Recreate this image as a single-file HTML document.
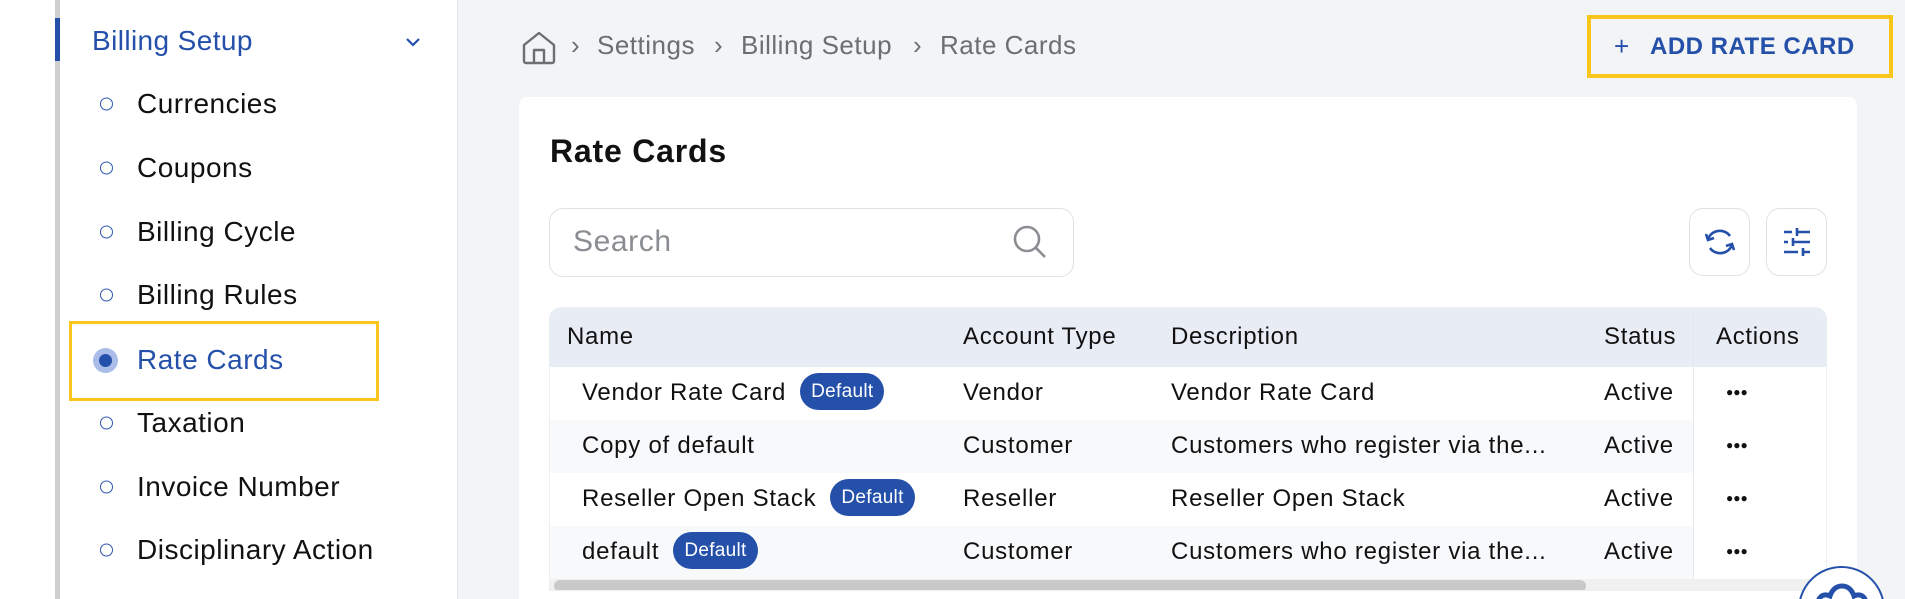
<!DOCTYPE html>
<html style="width:1905px;height:599px;overflow:hidden"><head><meta charset="utf-8"><style>
*{margin:0;padding:0;box-sizing:border-box}
body{width:1905px;height:599px;overflow:hidden;background:#f3f4f6;font-family:"Liberation Sans",sans-serif;position:relative;color:#111}
.a{position:absolute;white-space:nowrap}
#side{position:absolute;left:0;top:0;width:458px;height:599px;background:#fff;border-right:1px solid #e3e5e9}
.mi{position:absolute;left:137px;font-size:28px;letter-spacing:0.5px;color:#111;transform:translateY(-50%)}
.dot{position:absolute;left:100px;width:13px;height:13px;border:1.5px solid #2f55b0;border-radius:50%;transform:translateY(-50%)}
.th{position:absolute;top:307px;height:59px;line-height:59px;font-size:24px;letter-spacing:0.7px;color:#111}
.td{position:absolute;font-size:24px;letter-spacing:0.75px;color:#111;line-height:53px}
.badge{display:inline-block;background:#2450aa;color:#fff;font-size:19px;letter-spacing:0.3px;line-height:37px;height:37px;padding:0 11px;border-radius:19px;vertical-align:middle;margin-left:14px;position:relative;top:-2px}
.dots{position:absolute;left:1726px;font-size:12px}
.bc{position:absolute;top:30px;font-size:26px;letter-spacing:0.5px;color:#6b6e73}
</style></head><body>
<div id="side">
 <div class="a" style="left:55px;top:0;width:5px;height:599px;background:#cfcfcf"></div>
 <div class="a" style="left:55px;top:18px;width:5px;height:43px;background:#2450aa"></div>
 <div class="a" style="left:92px;top:25px;font-size:28px;letter-spacing:0.4px;color:#2450aa">Billing Setup</div>
 <svg class="a" style="left:403px;top:35px" width="20" height="14" viewBox="0 0 20 14"><path d="M4 4l6 6 6-6" stroke="#2450aa" stroke-width="2.2" fill="none"/></svg>
 <div class="dot" style="top:104px"></div><div class="mi" style="top:104px">Currencies</div>
 <div class="dot" style="top:168px"></div><div class="mi" style="top:168px">Coupons</div>
 <div class="dot" style="top:232px"></div><div class="mi" style="top:232px">Billing Cycle</div>
 <div class="dot" style="top:295px"></div><div class="mi" style="top:295px">Billing Rules</div>
 <div class="a" style="left:69px;top:321px;width:310px;height:80px;border:3px solid #fbc61b"></div>
 <div class="a" style="left:93px;top:348px;width:25px;height:25px;border-radius:50%;background:#a9bde8"></div>
 <div class="a" style="left:99px;top:354px;width:13px;height:13px;border-radius:50%;background:#2450aa"></div>
 <div class="mi" style="top:360px;color:#2450aa">Rate Cards</div>
 <div class="dot" style="top:423px"></div><div class="mi" style="top:423px">Taxation</div>
 <div class="dot" style="top:487px"></div><div class="mi" style="top:487px">Invoice Number</div>
 <div class="dot" style="top:550px"></div><div class="mi" style="top:550px">Disciplinary Action</div>
</div>
<svg class="a" style="left:521px;top:30px" width="36" height="35" viewBox="0 0 36 35"><path d="M3 15L18 3l15 12v16a2 2 0 0 1-2 2H5a2 2 0 0 1-2-2z M13 33V20h10v13" stroke="#6b6e73" stroke-width="2.4" fill="none" stroke-linejoin="round"/></svg>
<div class="bc" style="left:571px">›</div>
<div class="bc" style="left:597px">Settings</div>
<div class="bc" style="left:714px">›</div>
<div class="bc" style="left:741px">Billing Setup</div>
<div class="bc" style="left:913px">›</div>
<div class="bc" style="left:940px">Rate Cards</div>
<div class="a" style="left:1587px;top:15px;width:306px;height:63px;border:4px solid #fbc61b"></div>
<div class="a" style="left:1614px;top:31px;font-size:26px;color:#2450aa;font-weight:300">+</div>
<div class="a" style="left:1650px;top:33px;font-size:24px;color:#2450aa;font-weight:bold;letter-spacing:0.5px">ADD RATE CARD</div>
<div class="a" style="left:519px;top:97px;width:1338px;height:502px;background:#fff;border-radius:8px 8px 0 0"></div>
<div class="a" style="left:550px;top:133px;font-size:32px;letter-spacing:0.8px;font-weight:bold;color:#111">Rate Cards</div>
<div class="a" style="left:549px;top:208px;width:525px;height:69px;border:1px solid #dfe1e5;border-radius:14px"></div>
<div class="a" style="left:573px;top:225px;font-size:30px;letter-spacing:0.6px;color:#8a8d92">Search</div>
<svg class="a" style="left:1010px;top:222px" width="40" height="40" viewBox="0 0 40 40"><circle cx="17" cy="17" r="12" stroke="#8a8d92" stroke-width="2.6" fill="none"/><path d="M26 26l9 9" stroke="#8a8d92" stroke-width="2.6"/></svg>
<div class="a" style="left:1689px;top:208px;width:61px;height:68px;border:1px solid #dfe1e5;border-radius:14px"></div>
<svg class="a" style="left:1702px;top:226px" width="36" height="32" viewBox="0 0 36 32"><path d="M6 14a12 11 0 0 1 22-4 M30 18a12 11 0 0 1-22 4" stroke="#2450aa" stroke-width="2.6" fill="none"/><path d="M4 8l2 6 6-2 M32 24l-2-6-6 2" stroke="#2450aa" stroke-width="2.6" fill="none"/></svg>
<div class="a" style="left:1766px;top:208px;width:61px;height:68px;border:1px solid #dfe1e5;border-radius:14px"></div>
<svg class="a" style="left:1783px;top:228px" width="28" height="28" viewBox="0 0 28 28"><path d="M1 4h8M15 4h12M14 0v8M1 14h4M11 14h16M10 10v8M1 24h14M21 24h6M20 20v8" stroke="#2450aa" stroke-width="2.6"/></svg>
<div class="a" style="left:549px;top:307px;width:1278px;height:284px;border-radius:12px 12px 0 0;overflow:hidden;border:1px solid #eceef1">
 <div class="a" style="left:0;top:0;width:1278px;height:59px;background:#e8ecf5"></div>
 <div class="a" style="left:0;top:112px;width:1278px;height:53px;background:#f8f9fb"></div>
 <div class="a" style="left:0;top:218px;width:1278px;height:53px;background:#f8f9fb"></div>
 <div class="a" style="left:1143px;top:0;width:1px;height:271px;background:#e6e8ec"></div>
 <div class="a" style="left:1144px;top:59px;width:134px;height:212px;background:#fff"></div>
 <div class="a" style="left:0;top:271px;width:1278px;height:13px;background:#f0f0f0"></div>
 <div class="a" style="left:4px;top:272px;width:1032px;height:12px;background:#c9c9c9;border-radius:6px"></div>
</div>
<div class="th" style="left:567px">Name</div>
<div class="th" style="left:963px">Account Type</div>
<div class="th" style="left:1171px">Description</div>
<div class="th" style="left:1604px">Status</div>
<div class="th" style="left:1716px">Actions</div>
<div class="td" style="left:582px;top:366px">Vendor Rate Card<span class="badge">Default</span></div>
<div class="td" style="left:963px;top:366px">Vendor</div>
<div class="td" style="left:1171px;top:366px">Vendor Rate Card</div>
<div class="td" style="left:1604px;top:366px">Active</div>
<div class="dots" style="top:385px">●●●</div>
<div class="td" style="left:582px;top:419px">Copy of default</div>
<div class="td" style="left:963px;top:419px">Customer</div>
<div class="td" style="left:1171px;top:419px">Customers who register via the...</div>
<div class="td" style="left:1604px;top:419px">Active</div>
<div class="dots" style="top:438px">●●●</div>
<div class="td" style="left:582px;top:472px">Reseller Open Stack<span class="badge">Default</span></div>
<div class="td" style="left:963px;top:472px">Reseller</div>
<div class="td" style="left:1171px;top:472px">Reseller Open Stack</div>
<div class="td" style="left:1604px;top:472px">Active</div>
<div class="dots" style="top:491px">●●●</div>
<div class="td" style="left:582px;top:525px">default<span class="badge">Default</span></div>
<div class="td" style="left:963px;top:525px">Customer</div>
<div class="td" style="left:1171px;top:525px">Customers who register via the...</div>
<div class="td" style="left:1604px;top:525px">Active</div>
<div class="dots" style="top:544px">●●●</div>
<div class="a" style="left:1790px;top:560px;width:110px;height:39px;overflow:hidden">
 <div class="a" style="left:8px;top:6px;width:87px;height:87px;border-radius:50%;border:2px solid #2450aa;background:#fff"></div>
 <svg class="a" style="left:26px;top:22px" width="52" height="20" viewBox="0 0 52 20"><path d="M2 20c2-8 8-8 12-6 2-6 6-10 12-10s10 4 12 10c4-2 10-2 12 6" stroke="#2450aa" stroke-width="5" fill="none"/></svg>
</div>
</body></html>
